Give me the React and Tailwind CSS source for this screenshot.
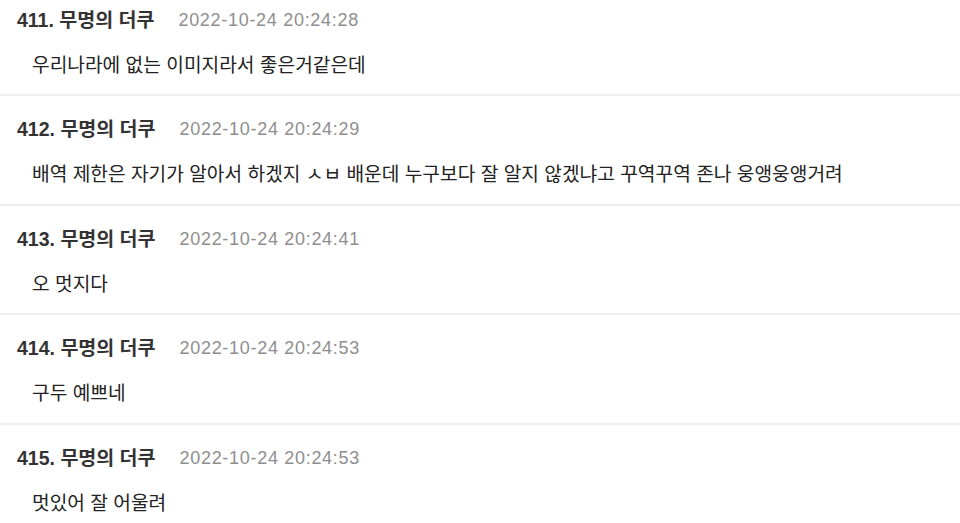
import React from "react";

const comments = [
  { no: 411, date: "2022-10-24 20:24:28", text: "우리나라에 없는 이미지라서 좋은거같은데" },
  {
    no: 412,
    date: "2022-10-24 20:24:29",
    text: "배역 제한은 자기가 알아서 하겠지 ㅅㅂ 배운데 누구보다 잘 알지 않겠냐고 꾸역꾸역 존나 웅앵웅앵거려",
  },
  { no: 413, date: "2022-10-24 20:24:41", text: "오 멋지다" },
  { no: 414, date: "2022-10-24 20:24:53", text: "구두 예쁘네" },
  { no: 415, date: "2022-10-24 20:24:53", text: "멋있어 잘 어울려" },
];

function Comment({ no, date, text }) {
  return (
    <div className="border-b-2 border-[#efefef] pt-[21px] pb-[16.5px] pl-[17px] pr-4">
      <div className="flex items-center h-6 leading-6">
        <span className="text-[19.5px] font-bold text-[#333]">
          {no}. 무명의 더쿠
        </span>
        <span className="ml-6 text-[18px] tracking-[0.7px] text-[#8e8e8e]">
          {date}
        </span>
      </div>
      <p className="mt-[22px] pl-[15px] h-6 leading-6 text-[19.2px] text-[#222] whitespace-nowrap">
        {text}
      </p>
    </div>
  );
}

export default function App() {
  return (
    <div
      className="w-[960px] h-[523px] overflow-hidden bg-white"
      style={{ fontFamily: '"Liberation Sans", "Noto Sans CJK KR", sans-serif' }}
    >
      <div className="-mt-[13.5px]">
        {comments.map((c) => (
          <Comment key={c.no} {...c} />
        ))}
      </div>
    </div>
  );
}
